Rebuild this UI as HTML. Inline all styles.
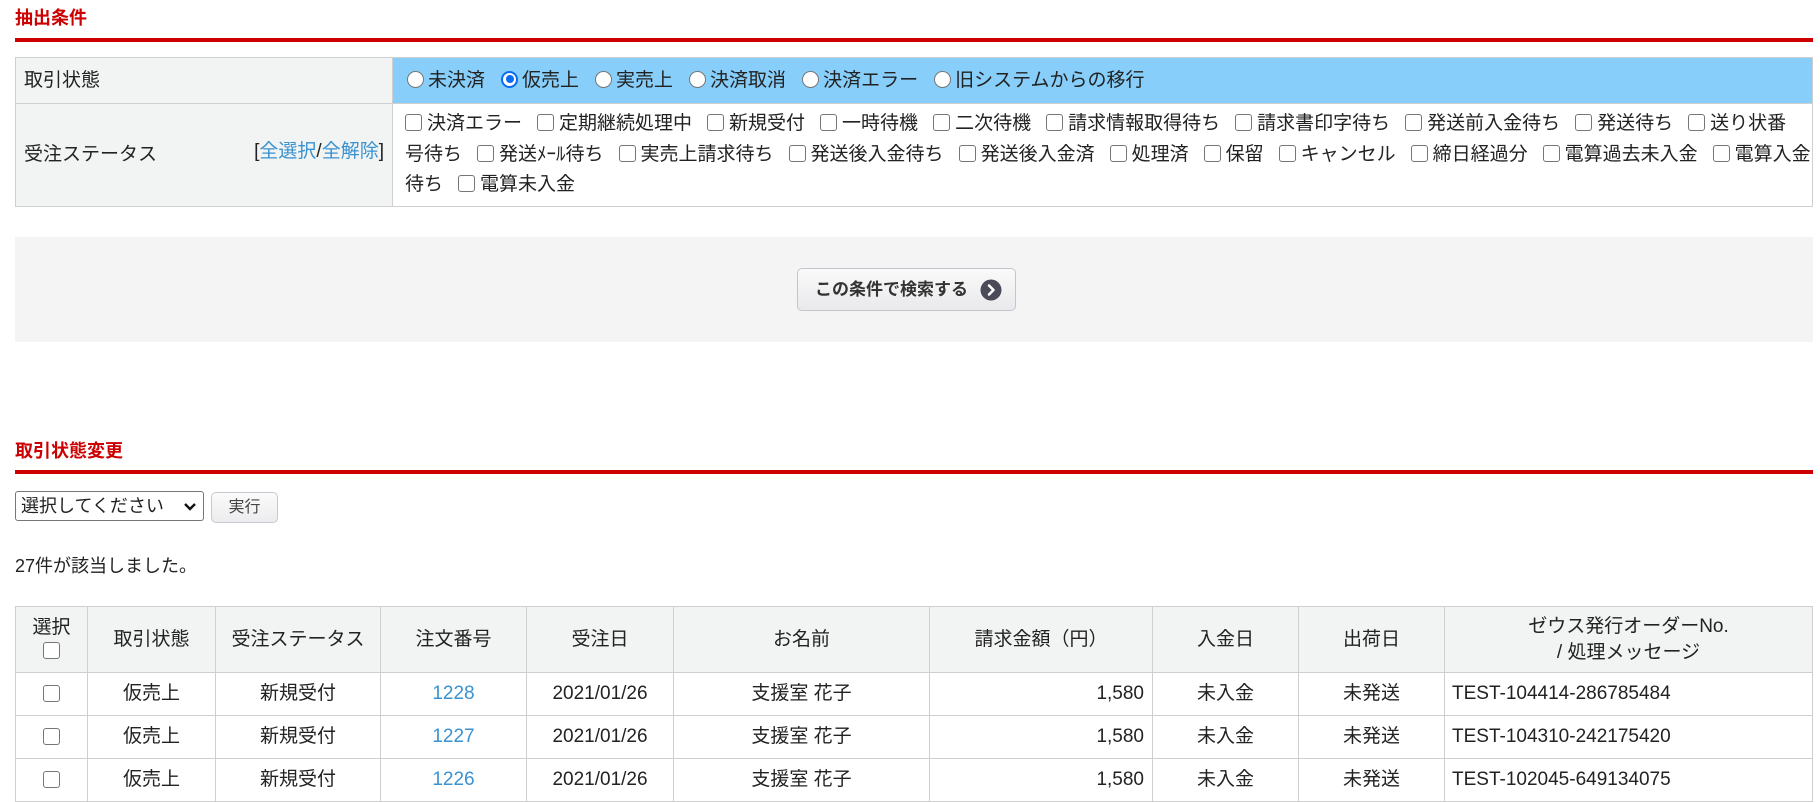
<!DOCTYPE html>
<html><head><meta charset="utf-8"><style>
*{box-sizing:border-box;margin:0;padding:0}
body{width:1820px;height:802px;overflow:hidden;background:#fff;font-family:"Liberation Sans","Noto Sans CJK JP",sans-serif;font-size:19px;color:#222;position:relative}
.h{position:absolute;left:15px;color:#cc0000;font-weight:bold;font-size:18px}
.rl{position:absolute;left:15px;width:1798px;height:4px;background:#cc0000}
.cb{display:inline-block;width:17px;height:17px;border:1px solid #767676;border-radius:3px;background:#fff;vertical-align:-2px;margin-right:5px}
.rd{display:inline-block;width:17px;height:17px;border:1px solid #767676;border-radius:50%;background:#fff;vertical-align:-2px;margin-right:4px;position:relative}
.rd.on{border:2px solid #0b6cf0}
.rd.on::after{content:"";position:absolute;left:2.5px;top:2.5px;width:8px;height:8px;border-radius:50%;background:#0b6cf0}
.it{margin-right:15px;white-space:nowrap}
.r1 .it{margin-right:16px}
table{border-collapse:collapse}
td,th{border:1px solid #cfcfcf;font-weight:normal;line-height:24px}
a{color:#3a92d0;text-decoration:none}
</style></head><body>
<div class="h" style="top:4px">抽出条件</div>
<div class="rl" style="top:38px"></div>
<table style="position:absolute;left:15px;top:57px;width:1798px">
<tr style="height:46px"><td style="width:377px;background:#f2f3f3;padding-left:8px">取引状態</td>
<td class="r1" style="background:#87cefa;padding-left:14px;white-space:nowrap"><span class="it"><span class="rd"></span>未決済</span><span class="it"><span class="rd on"></span>仮売上</span><span class="it"><span class="rd"></span>実売上</span><span class="it"><span class="rd"></span>決済取消</span><span class="it"><span class="rd"></span>決済エラー</span><span class="it"><span class="rd"></span>旧システムからの移行</span></td></tr>
<tr style="height:103px"><td style="background:#f2f3f3;padding-left:8px;position:relative">受注ステータス<span style="position:absolute;right:8px;top:36px">[<a>全選択</a>/<a>全解除</a>]</span></td>
<td style="padding-left:12px;line-height:30.5px;white-space:nowrap">
<div><span class="it"><span class="cb"></span>決済エラー</span><span class="it"><span class="cb"></span>定期継続処理中</span><span class="it"><span class="cb"></span>新規受付</span><span class="it"><span class="cb"></span>一時待機</span><span class="it"><span class="cb"></span>二次待機</span><span class="it"><span class="cb"></span>請求情報取得待ち</span><span class="it"><span class="cb"></span>請求書印字待ち</span><span class="it"><span class="cb"></span>発送前入金待ち</span><span class="it"><span class="cb"></span>発送待ち</span><span><span class="cb"></span>送り状番</span></div>
<div><span class="it">号待ち</span><span class="it"><span class="cb"></span>発送ﾒｰﾙ待ち</span><span class="it"><span class="cb"></span>実売上請求待ち</span><span class="it"><span class="cb"></span>発送後入金待ち</span><span class="it"><span class="cb"></span>発送後入金済</span><span class="it"><span class="cb"></span>処理済</span><span class="it"><span class="cb"></span>保留</span><span class="it"><span class="cb"></span>キャンセル</span><span class="it"><span class="cb"></span>締日経過分</span><span class="it"><span class="cb"></span>電算過去未入金</span><span><span class="cb"></span>電算入金</span></div>
<div><span class="it">待ち</span><span><span class="cb"></span>電算未入金</span></div>
</td></tr></table>
<div style="position:absolute;left:15px;top:237px;width:1798px;height:105px;background:#f4f4f4"></div>
<div style="position:absolute;left:797px;top:268px;width:219px;height:43px;border:1px solid #c4c4cc;border-radius:5px;background:linear-gradient(#fafafa,#e9e9ec);font-weight:bold;font-size:17px;color:#333;line-height:41px;padding-left:17px;white-space:nowrap">この条件で検索する<svg width="22" height="22" viewBox="0 0 22 22" style="position:absolute;left:182px;top:10px"><circle cx="11" cy="11" r="10.5" fill="#4a4a58"/><path d="M9 6.5 L13.5 11 L9 15.5" stroke="#fff" stroke-width="2.6" fill="none" stroke-linecap="round" stroke-linejoin="round"/></svg></div>
<div class="h" style="top:437px">取引状態変更</div>
<div class="rl" style="top:470px"></div>
<div style="position:absolute;left:15px;top:491px;width:189px;height:30px;border:1px solid #767676;border-radius:3px;font-size:18px;line-height:28px;padding-left:5px">選択してください<svg width="14" height="10" viewBox="0 0 14 10" style="position:absolute;right:6px;top:10px"><path d="M2 2 L7 7 L12 2" stroke="#111" stroke-width="2.4" fill="none"/></svg></div>
<div style="position:absolute;left:211px;top:492px;width:67px;height:31px;border:1px solid #c8c8d0;border-radius:5px;background:linear-gradient(#fbfbfb,#ececee);font-size:16px;line-height:29px;text-align:center;color:#444">実行</div>
<div style="position:absolute;left:15px;top:552px;font-size:18px">27件が該当しました。</div>
<table style="position:absolute;left:15px;top:606px;width:1798px;text-align:center">
<tr style="height:66px;background:#f2f3f3"><th style="width:72px;line-height:24px">選択<br><span class="cb" style="margin:0"></span></th><th style="width:128px">取引状態</th><th style="width:165px">受注ステータス</th><th style="width:146px">注文番号</th><th style="width:147px">受注日</th><th style="width:256px">お名前</th><th style="width:223px">請求金額（円）</th><th style="width:146px">入金日</th><th style="width:146px">出荷日</th><th style="line-height:26px">ゼウス発行オーダーNo.<br>/ 処理メッセージ</th></tr>
<tr style="height:43px"><td><span class="cb" style="margin:0;vertical-align:middle"></span></td><td>仮売上</td><td>新規受付</td><td><a>1228</a></td><td>2021/01/26</td><td>支援室 花子</td><td style="text-align:right;padding-right:8px">1,580</td><td>未入金</td><td>未発送</td><td style="text-align:left;padding-left:7px">TEST-104414-286785484</td></tr>
<tr style="height:43px"><td><span class="cb" style="margin:0;vertical-align:middle"></span></td><td>仮売上</td><td>新規受付</td><td><a>1227</a></td><td>2021/01/26</td><td>支援室 花子</td><td style="text-align:right;padding-right:8px">1,580</td><td>未入金</td><td>未発送</td><td style="text-align:left;padding-left:7px">TEST-104310-242175420</td></tr>
<tr style="height:43px"><td><span class="cb" style="margin:0;vertical-align:middle"></span></td><td>仮売上</td><td>新規受付</td><td><a>1226</a></td><td>2021/01/26</td><td>支援室 花子</td><td style="text-align:right;padding-right:8px">1,580</td><td>未入金</td><td>未発送</td><td style="text-align:left;padding-left:7px">TEST-102045-649134075</td></tr>
</table>
</body></html>
